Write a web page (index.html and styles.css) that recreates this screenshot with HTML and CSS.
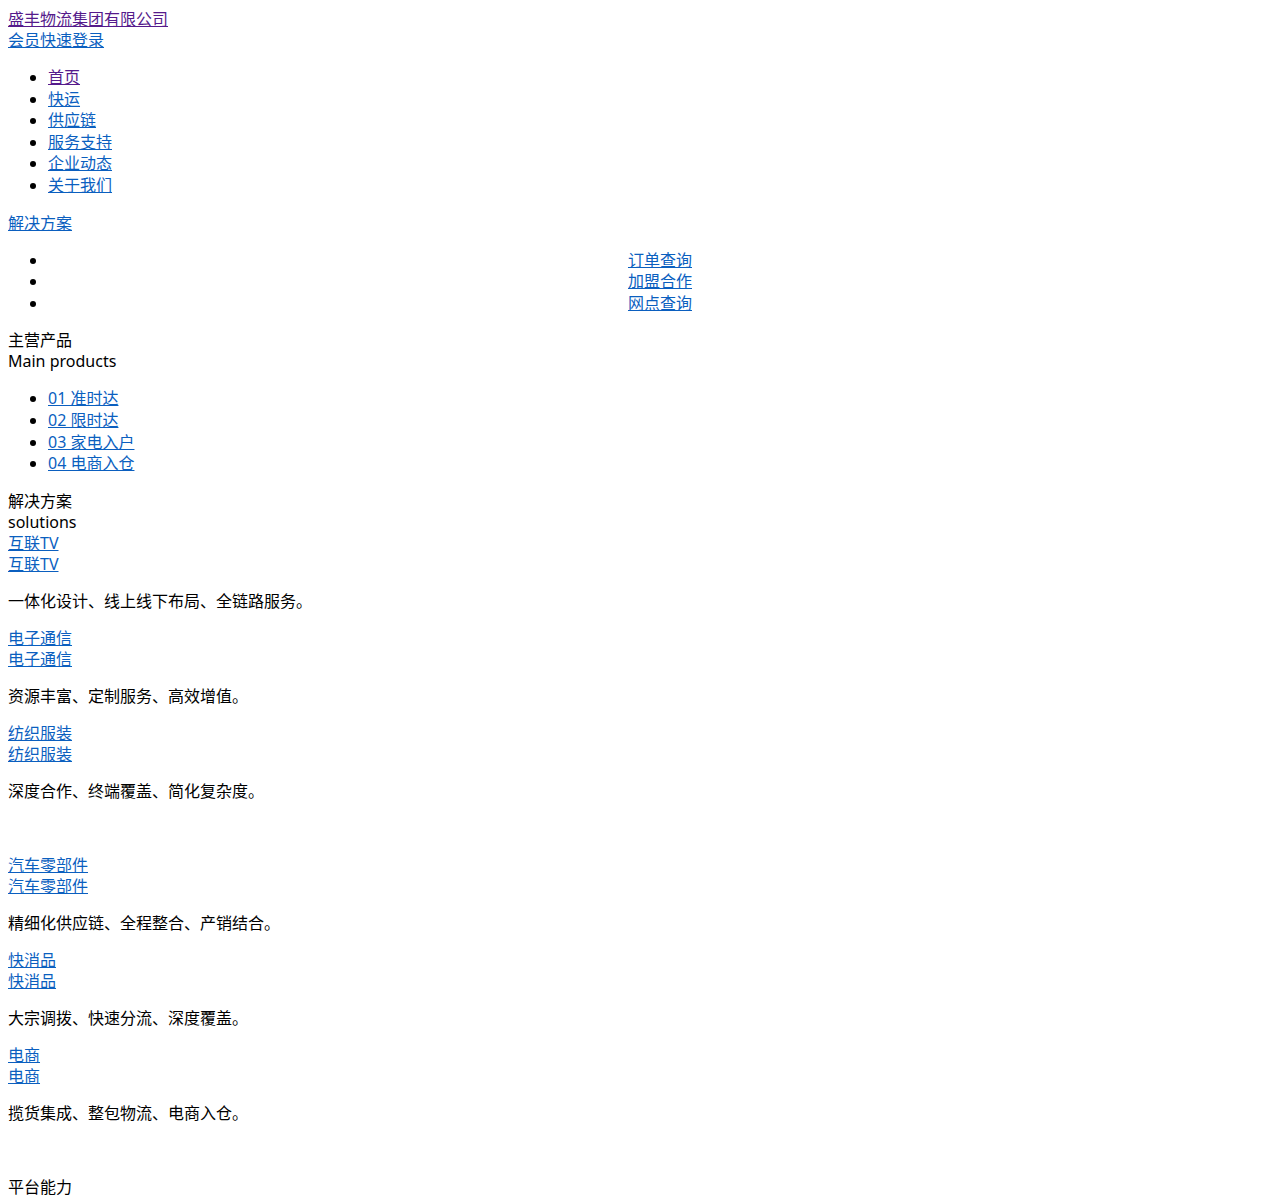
FILE: index.html
```html
<!DOCTYPE html>
<html lang="zh-CN">
<head>
<meta charset="utf-8">
<title>盛丰物流集团有限公司</title>
<link rel="stylesheet" href="styles.css">
</head>
<body>
<div class="top">
  <div><a class="visited" href="#">盛丰物流集团有限公司</a></div>
  <div><a href="#">会员快速登录</a></div>
</div>
<ul class="nav">
  <li><a class="visited" href="#">首页</a></li>
  <li><a href="#">快运</a></li>
  <li><a href="#">供应链</a></li>
  <li><a href="#">服务支持</a></li>
  <li><a href="#">企业动态</a></li>
  <li><a href="#">关于我们</a></li>
</ul>
<p class="solution-link"><a href="#">解决方案</a></p>
<ul class="quick">
  <li><a href="#">订单查询</a></li>
  <li><a href="#">加盟合作</a></li>
  <li><a href="#">网点查询</a></li>
</ul>
<div class="section-title">
  <div>主营产品</div>
  <div>Main products</div>
</div>
<ul class="products">
  <li><a href="#">01 准时达</a></li>
  <li><a href="#">02 限时达</a></li>
  <li><a href="#">03 家电入户</a></li>
  <li><a href="#">04 电商入仓</a></li>
</ul>
<div class="section-title">
  <div>解决方案</div>
  <div>solutions</div>
</div>
<div class="case">
  <div><a href="#">互联TV</a></div>
  <div><a href="#">互联TV</a></div>
  <p>一体化设计、线上线下布局、全链路服务。</p>
</div>
<div class="case">
  <div><a href="#">电子通信</a></div>
  <div><a href="#">电子通信</a></div>
  <p>资源丰富、定制服务、高效增值。</p>
</div>
<div class="case">
  <div><a href="#">纺织服装</a></div>
  <div><a href="#">纺织服装</a></div>
  <p>深度合作、终端覆盖、简化复杂度。</p>
</div>
<p>&nbsp;</p>
<div class="case">
  <div><a href="#">汽车零部件</a></div>
  <div><a href="#">汽车零部件</a></div>
  <p>精细化供应链、全程整合、产销结合。</p>
</div>
<div class="case">
  <div><a href="#">快消品</a></div>
  <div><a href="#">快消品</a></div>
  <p>大宗调拨、快速分流、深度覆盖。</p>
</div>
<div class="case">
  <div><a href="#">电商</a></div>
  <div><a href="#">电商</a></div>
  <p>揽货集成、整包物流、电商入仓。</p>
</div>
<p>&nbsp;</p>
<div class="section-title">
  <div>平台能力</div>
</div>
</body>
</html>
```
FILE: styles.css
```css
html {
  background: #ffffff;
}
body {
  margin: 8px;
  padding-top: 1px;
  font-family: "Noto Sans", "Noto Sans CJK SC", sans-serif;
  font-size: 16px;
  line-height: 21px;
  color: #000000;
}
a {
  color: #0b5fbf;
  text-decoration: underline;
}
a.visited {
  color: #551a8b;
}
p {
  margin: 16px 0;
}
ul {
  margin: 16px 0;
  padding-left: 40px;
}
li {
  line-height: 21.6px;
}
.quick li {
  text-align: center;
}
.solution-link {
  margin: 16px 0;
}
```
